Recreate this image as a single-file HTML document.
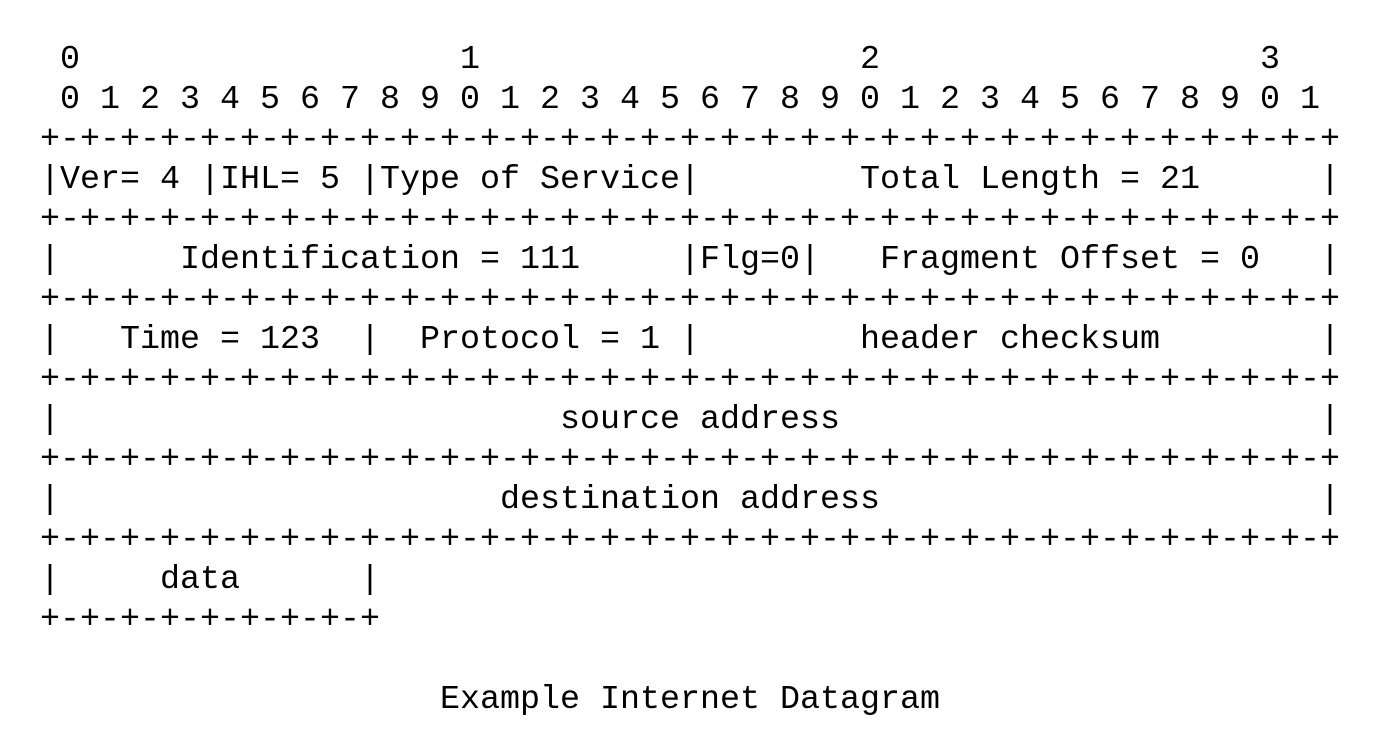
<!DOCTYPE html>
<html><head><meta charset="utf-8"><style>
html,body{margin:0;padding:0;background:#fff;width:1384px;height:740px;overflow:hidden}
pre{position:absolute;left:40px;top:40px;margin:0;font-family:"Liberation Mono",monospace;font-size:33.33px;line-height:40px;color:#000}
</style></head><body><pre> 0                   1                   2                   3
 0 1 2 3 4 5 6 7 8 9 0 1 2 3 4 5 6 7 8 9 0 1 2 3 4 5 6 7 8 9 0 1
+-+-+-+-+-+-+-+-+-+-+-+-+-+-+-+-+-+-+-+-+-+-+-+-+-+-+-+-+-+-+-+-+
|Ver= 4 |IHL= 5 |Type of Service|        Total Length = 21      |
+-+-+-+-+-+-+-+-+-+-+-+-+-+-+-+-+-+-+-+-+-+-+-+-+-+-+-+-+-+-+-+-+
|      Identification = 111     |Flg=0|   Fragment Offset = 0   |
+-+-+-+-+-+-+-+-+-+-+-+-+-+-+-+-+-+-+-+-+-+-+-+-+-+-+-+-+-+-+-+-+
|   Time = 123  |  Protocol = 1 |        header checksum        |
+-+-+-+-+-+-+-+-+-+-+-+-+-+-+-+-+-+-+-+-+-+-+-+-+-+-+-+-+-+-+-+-+
|                         source address                        |
+-+-+-+-+-+-+-+-+-+-+-+-+-+-+-+-+-+-+-+-+-+-+-+-+-+-+-+-+-+-+-+-+
|                      destination address                      |
+-+-+-+-+-+-+-+-+-+-+-+-+-+-+-+-+-+-+-+-+-+-+-+-+-+-+-+-+-+-+-+-+
|     data      |
+-+-+-+-+-+-+-+-+

                    Example Internet Datagram</pre></body></html>
